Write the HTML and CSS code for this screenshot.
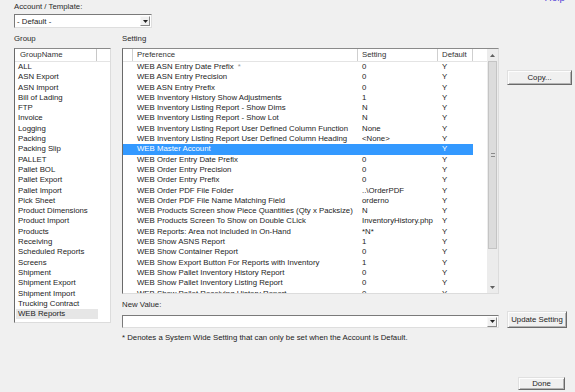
FILE: index.html
```html
<!DOCTYPE html>
<html>
<head>
<meta charset="utf-8">
<title>Preferences</title>
<link rel="stylesheet" href="styles.css">
</head>
<body>
<div class="page">
  <div class="top">
    <div class="acct">
      <div class="lbl acct-lbl">Account / Template:</div>
      <div class="combo acct-combo">
        <span class="combo-text">- Default -</span>
        <span class="combo-btn"><svg width="5" height="3" viewBox="0 0 5 3"><polygon points="0,0 5,0 2.5,3" fill="#222"/></svg></span>
      </div>
    </div>
    <a class="help">Help</a>
  </div>

  <div class="main">
    <div class="group-col">
      <div class="lbl sec">Group</div>
      <div class="list">
        <div class="lhead"><span class="lh-name">GroupName</span><span class="lh-fill"></span></div>
        <div class="litem">ALL</div>
        <div class="litem">ASN Export</div>
        <div class="litem">ASN Import</div>
        <div class="litem">Bill of Lading</div>
        <div class="litem">FTP</div>
        <div class="litem">Invoice</div>
        <div class="litem">Logging</div>
        <div class="litem">Packing</div>
        <div class="litem">Packing Slip</div>
        <div class="litem">PALLET</div>
        <div class="litem">Pallet BOL</div>
        <div class="litem">Pallet Export</div>
        <div class="litem">Pallet Import</div>
        <div class="litem">Pick Sheet</div>
        <div class="litem">Product Dimensions</div>
        <div class="litem">Product Import</div>
        <div class="litem">Products</div>
        <div class="litem">Receiving</div>
        <div class="litem">Scheduled Reports</div>
        <div class="litem">Screens</div>
        <div class="litem">Shipment</div>
        <div class="litem">Shipment Export</div>
        <div class="litem">Shipment Import</div>
        <div class="litem">Trucking Contract</div>
        <div class="litem sel">WEB Reports</div>
      </div>
    </div>

    <div class="setting-col">
      <div class="lbl sec">Setting</div>
      <div class="row1">
        <div class="grid">
          <div class="gbody">
            <div class="ghead"><span></span><span>Preference</span><span>Setting</span><span>Default</span><span class="gh-fill"></span></div>
            <div class="grow"><span></span><span>WEB ASN Entry Date Prefix <i class="star">*</i></span><span>0</span><span>Y</span></div>
            <div class="grow"><span></span><span>WEB ASN Entry Precision</span><span>0</span><span>Y</span></div>
            <div class="grow"><span></span><span>WEB ASN Entry Prefix</span><span>0</span><span>Y</span></div>
            <div class="grow"><span></span><span>WEB Inventory History Show Adjustments</span><span>1</span><span>Y</span></div>
            <div class="grow"><span></span><span>WEB Inventory Listing Report - Show Dims</span><span>N</span><span>Y</span></div>
            <div class="grow"><span></span><span>WEB Inventory Listing Report - Show Lot</span><span>N</span><span>Y</span></div>
            <div class="grow"><span></span><span>WEB Inventory Listing Report User Defined Column Function</span><span>None</span><span>Y</span></div>
            <div class="grow"><span></span><span>WEB Inventory Listing Report User Defined Column Heading</span><span>&lt;None&gt;</span><span>Y</span></div>
            <div class="grow sel"><span></span><span>WEB Master Account</span><span></span><span>Y</span></div>
            <div class="grow"><span></span><span>WEB Order Entry Date Prefix</span><span>0</span><span>Y</span></div>
            <div class="grow"><span></span><span>WEB Order Entry Precision</span><span>0</span><span>Y</span></div>
            <div class="grow"><span></span><span>WEB Order Entry Prefix</span><span>0</span><span>Y</span></div>
            <div class="grow"><span></span><span>WEB Order PDF File Folder</span><span>..\OrderPDF</span><span>Y</span></div>
            <div class="grow"><span></span><span>WEB Order PDF File Name Matching Field</span><span>orderno</span><span>Y</span></div>
            <div class="grow"><span></span><span>WEB Products Screen show Piece Quantities (Qty x Packsize)</span><span>N</span><span>Y</span></div>
            <div class="grow"><span></span><span>WEB Products Screen To Show on Double CLick</span><span>InventoryHistory.php</span><span>Y</span></div>
            <div class="grow"><span></span><span>WEB Reports: Area not included in On-Hand</span><span>*N*</span><span>Y</span></div>
            <div class="grow"><span></span><span>WEB Show ASNS Report</span><span>1</span><span>Y</span></div>
            <div class="grow"><span></span><span>WEB Show Container Report</span><span>0</span><span>Y</span></div>
            <div class="grow"><span></span><span>WEB Show Export Button For Reports with Inventory</span><span>1</span><span>Y</span></div>
            <div class="grow"><span></span><span>WEB Show Pallet Inventory History Report</span><span>0</span><span>Y</span></div>
            <div class="grow"><span></span><span>WEB Show Pallet Inventory Listing Report</span><span>0</span><span>Y</span></div>
            <div class="grow"><span></span><span>WEB Show Pallet Receiving History Report</span><span>0</span><span>Y</span></div>
          </div>
          <div class="vscroll">
            <div class="sarrow"><svg width="5" height="3" viewBox="0 0 5 3"><polygon points="0,3 5,3 2.5,0" fill="#606060"/></svg></div>
            <div class="track">
              <div class="thumb"><span class="grip"></span></div>
            </div>
            <div class="sarrow"><svg width="5" height="3" viewBox="0 0 5 3"><polygon points="0,0 5,0 2.5,3" fill="#606060"/></svg></div>
          </div>
        </div>
        <div class="side"><button class="btn copy">Copy...</button></div>
      </div>

      <div class="lbl nv-lbl">New Value:</div>
      <div class="row3">
        <div class="combo nv-combo">
          <span class="combo-text"></span>
          <span class="combo-btn"><svg width="5" height="3" viewBox="0 0 5 3"><polygon points="0,0 5,0 2.5,3" fill="#222"/></svg></span>
        </div>
        <button class="btn upd">Update Setting</button>
      </div>
      <div class="note">* Denotes a System Wide Setting that can only be set when the Account is Default.</div>
    </div>
  </div>

  <div class="footer"><button class="btn done">Done</button></div>
</div>
</body>
</html>
```

FILE: styles.css
```css
html, body {
  margin: 0;
  padding: 0;
}
body {
  background: #f0f0f0;
  font-family: "Liberation Sans", Arial, sans-serif;
  font-size: 7.8px;
  color: #1c1c1c;
  width: 575px;
  height: 392px;
  overflow: hidden;
}
.page {
  padding-left: 14px;
}
.top {
  display: flex;
  justify-content: space-between;
  height: 34px;
}
.lbl {
  height: 10px;
  line-height: 10px;
  color: #2a2a2a;
  white-space: nowrap;
}
.acct-lbl {
  margin-top: 2px;
}
.combo {
  display: flex;
  align-items: center;
  box-sizing: border-box;
  background: #fff;
  border: 1px solid;
  border-color: #7a7a7a #dedede #dedede #7a7a7a;
}
.combo-text {
  flex: 1;
  padding-left: 2px;
  white-space: nowrap;
}
.combo-btn {
  width: 10px;
  height: 10px;
  margin-right: 1px;
  box-sizing: border-box;
  background: #f0f0f0;
  border: 1px solid;
  border-color: #f8f8f8 #8a8a8a #8a8a8a #f8f8f8;
  display: flex;
  align-items: center;
  justify-content: center;
}
.acct-combo {
  margin-top: 2px;
  width: 138px;
  height: 14px;
}
.help {
  color: #5a48d8;
  font-size: 10px;
  line-height: 10px;
  margin-top: -7px;
  margin-right: 10px;
  height: 10px;
}
.main {
  display: flex;
}
.group-col {
  width: 97px;
  margin-right: 11px;
}
.sec {
  margin-bottom: 4px;
}
.list {
  box-sizing: border-box;
  height: 275px;
  background: #fff;
  border: 1px solid;
  border-color: #8a8a8a #dcdcdc #dcdcdc #6a6a6a;
  overflow: hidden;
}
.lhead {
  display: flex;
  height: 12px;
  border-bottom: 1px solid #e4e4e4;
  color: #333;
}
.lh-name {
  width: 82px;
  box-sizing: border-box;
  padding-left: 5px;
  line-height: 12px;
  border-right: 1px solid #c8c8c8;
}
.lh-fill {
  flex: 1;
}
.litem {
  height: 10.3px;
  line-height: 10.3px;
  padding-left: 3px;
  white-space: nowrap;
}
.litem.sel {
  width: 82px;
  box-sizing: border-box;
  background: #e6e6e6;
  margin-left: 1px;
  padding-left: 2px;
}
.setting-col {
  width: 452px;
}
.row1 {
  display: flex;
  align-items: flex-start;
}
.grid {
  display: flex;
  box-sizing: border-box;
  width: 377px;
  height: 246px;
  background: #fff;
  border: 1px solid;
  border-color: #8a8a8a #dcdcdc #dcdcdc #6a6a6a;
}
.gbody {
  flex: 1;
  overflow: hidden;
}
.ghead {
  display: grid;
  grid-template-columns: 10px 225px 80px 35px 1fr;
  height: 12px;
  border-bottom: 1px solid #e4e4e4;
  color: #333;
}
.ghead span {
  box-sizing: border-box;
  padding-left: 4px;
  line-height: 12px;
  border-right: 1px solid #cfcfcf;
  white-space: nowrap;
}
.ghead .gh-fill {
  border-right: none;
}
.grow {
  display: grid;
  grid-template-columns: 10px 225px 80px 35px;
  width: 350px;
  height: 10.3px;
  line-height: 10.3px;
}
.grow span {
  padding-left: 4px;
  white-space: nowrap;
}
.grow.sel {
  background: #3399ff;
  color: #fff;
}
.star {
  font-style: normal;
  color: #9a9a9a;
  padding-left: 2px;
}
.vscroll {
  width: 11px;
  display: flex;
  flex-direction: column;
  background: #ececec;
}
.sarrow {
  height: 12px;
  display: flex;
  align-items: center;
  justify-content: center;
}
.track {
  flex: 1;
}
.thumb {
  height: 188px;
  box-sizing: border-box;
  margin: 0 1px;
  background: #dcdcdc;
  border: 1px solid #c4c4c4;
  display: flex;
  align-items: center;
  justify-content: center;
}
.grip {
  width: 4px;
  height: 4px;
  border-top: 1px solid #8a8a8a;
  border-bottom: 1px solid #8a8a8a;
  box-sizing: border-box;
}
.side {
  margin-left: 8px;
  padding-top: 22px;
}
.btn {
  font-family: "Liberation Sans", Arial, sans-serif;
  font-size: 7.8px;
  color: #1c1c1c;
  background: #f0f0f0;
  border: 1px solid;
  border-color: #e0e0e0 #6a6a6a #6a6a6a #e0e0e0;
  box-shadow: inset 1px 1px #fdfdfd, inset -1px -1px #b4b4b4;
  padding: 0;
  margin: 0;
  line-height: 10px;
}
.copy {
  width: 65px;
  height: 15px;
}
.nv-lbl {
  margin-top: 6px;
}
.row3 {
  display: flex;
  align-items: flex-end;
  height: 17px;
  margin-top: 1px;
}
.nv-combo {
  width: 377px;
  height: 13px;
}
.upd {
  margin-left: 8px;
  width: 60px;
  height: 17px;
}
.note {
  margin-top: 5px;
  height: 10px;
  line-height: 10px;
  white-space: nowrap;
}
.footer {
  display: flex;
  justify-content: flex-end;
  margin-top: 34px;
  padding-right: 10px;
}
.done {
  width: 47px;
  height: 13px;
}
```
